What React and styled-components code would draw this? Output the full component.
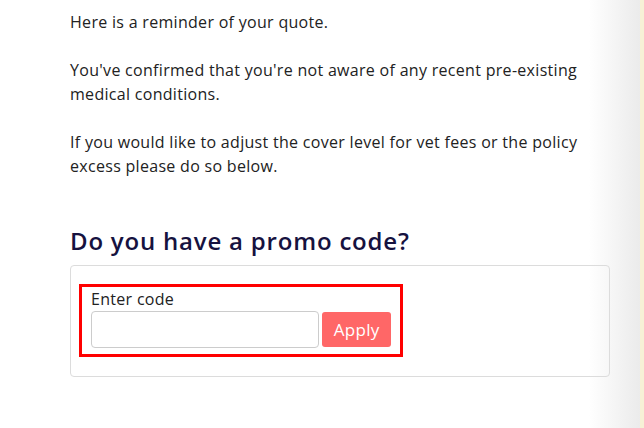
import React, { useState } from "react"
import styled, { createGlobalStyle } from "styled-components"

const GlobalStyle = createGlobalStyle`
    html, body {
        margin: 0;
        padding: 0;
        background: #fff;
    }
    body {
        font-family: "Open Sans", "Noto Sans", Arial, sans-serif;
        color: #222;
    }
`

const Page = styled.div`
    display: flex;
    width: 644px;
    height: 428px;
    overflow: hidden;
`

const Main = styled.div`
    flex: 1;
    padding: 10px 0 0 70px;
    background: linear-gradient(to right, #fff 0%, #fff 92%, #ebebeb 100%);
`

const SideEdge = styled.div`
    width: 4px;
    background: #f7f1d6;
`

const Content = styled.div`
    width: 540px;
`

const Text = styled.p`
    max-width: 530px;
    margin: 0 0 24px;
    font-size: 16px;
    line-height: 24px;
    letter-spacing: 0.3px;
    color: #222;
`

const Heading = styled.h2`
    margin: 48px 0 9px;
    font-size: 24px;
    line-height: 30px;
    font-weight: 600;
    color: #16123f;
    letter-spacing: 0.8px;
`

const Card = styled.div`
    border: 1px solid #dcdcdc;
    border-radius: 4px;
    padding: 18px 8px 20px 8px;
    height: 72px;
`

const Highlight = styled.div`
    display: inline-flex;
    flex-direction: column;
    border: 3px solid #f00;
    padding: 0 9px 6px 9px;
    width: 300px;
`

const Label = styled.label`
    font-size: 16px;
    line-height: 24px;
    letter-spacing: 0.3px;
    color: #222;
`

const Row = styled.div`
    display: flex;
    align-items: center;
    gap: 3px;
`

const Input = styled.input`
    box-sizing: border-box;
    width: 230px;
    height: 37px;
    border: 1px solid #ccc;
    border-radius: 4px;
    padding: 6px 10px;
    font-size: 16px;
    font-family: inherit;
    outline: none;
`

const ApplyButton = styled.button`
    box-sizing: border-box;
    width: 69px;
    height: 35px;
    border: none;
    border-radius: 3px;
    background-color: #ff6767;
    color: #fff;
    font-family: inherit;
    font-size: 17px;
    letter-spacing: 0.3px;
    cursor: pointer;
`

const App = () => {
    const [code, setCode] = useState("")

    return (
        <Page>
            <GlobalStyle />
            <Main>
                <Content>
                    <Text>Here is a reminder of your quote.</Text>
                    <Text>You've confirmed that you're not aware of any recent pre-existing medical conditions.</Text>
                    <Text>If you would like to adjust the cover level for vet fees or the policy excess please do so below.</Text>

                    <Heading>Do you have a promo code?</Heading>
                    <Card>
                        <Highlight>
                            <Label htmlFor="promo">Enter code</Label>
                            <Row>
                                <Input id="promo" type="text" value={code} onChange={(e) => setCode(e.target.value)} />
                                <ApplyButton>Apply</ApplyButton>
                            </Row>
                        </Highlight>
                    </Card>
                </Content>
            </Main>
            <SideEdge />
        </Page>
    )
}

export default App
